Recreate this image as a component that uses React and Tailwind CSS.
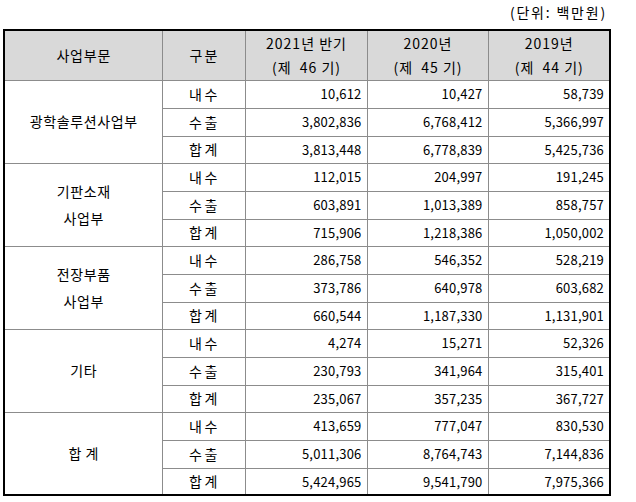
import React from "react";

const groups = [
  {
    name: ["광학솔루션사업부"],
    rows: [
      ["내수", "10,612", "10,427", "58,739"],
      ["수출", "3,802,836", "6,768,412", "5,366,997"],
      ["합계", "3,813,448", "6,778,839", "5,425,736"],
    ],
  },
  {
    name: ["기판소재", "사업부"],
    rows: [
      ["내수", "112,015", "204,997", "191,245"],
      ["수출", "603,891", "1,013,389", "858,757"],
      ["합계", "715,906", "1,218,386", "1,050,002"],
    ],
  },
  {
    name: ["전장부품", "사업부"],
    rows: [
      ["내수", "286,758", "546,352", "528,219"],
      ["수출", "373,786", "640,978", "603,682"],
      ["합계", "660,544", "1,187,330", "1,131,901"],
    ],
  },
  {
    name: ["기타"],
    rows: [
      ["내수", "4,274", "15,271", "52,326"],
      ["수출", "230,793", "341,964", "315,401"],
      ["합계", "235,067", "357,235", "367,727"],
    ],
  },
  {
    name: ["합 계"],
    rows: [
      ["내수", "413,659", "777,047", "830,530"],
      ["수출", "5,011,306", "8,764,743", "7,144,836"],
      ["합계", "5,424,965", "9,541,790", "7,975,366"],
    ],
  },
];

const heights = [28, 28, 27];

export default function App() {
  return (
    <div
      className="w-[636px] h-[502px] bg-white text-black text-[13px]"
      style={{ fontFamily: '"Noto Sans CJK KR", "Liberation Sans", sans-serif' }}
    >
      <div className="h-[29px] flex items-center justify-end pr-[29px] pb-[4px] text-[14px] tracking-[1.8px]">
        (단위: 백만원)
      </div>
      <table className="ml-[3px] w-[606px] table-fixed border-collapse border-2 border-black">
        <colgroup>
          <col className="w-[158px]" />
          <col className="w-[83px]" />
          <col className="w-[122px]" />
          <col className="w-[121px]" />
          <col className="w-[122px]" />
        </colgroup>
        <thead>
          <tr className="h-[50px] bg-[#d9d9d9] leading-[24px] text-[14px]">
            <th className="font-normal border border-[#8c8c8c] tracking-[0.8px] pl-[1px]">사업부문</th>
            <th className="font-normal border border-[#8c8c8c] tracking-[2px] pl-[2px]">구분</th>
            <th className="font-normal border border-[#8c8c8c] whitespace-pre tracking-[1px] pl-[1px]">
              {"2021년 반기\n(제  46 기)"}
            </th>
            <th className="font-normal border border-[#8c8c8c] whitespace-pre tracking-[1px] pl-[1px]">
              {"2020년\n(제  45 기)"}
            </th>
            <th className="font-normal border border-[#8c8c8c] whitespace-pre tracking-[1px] pl-[1px]">
              {"2019년\n(제  44 기)"}
            </th>
          </tr>
        </thead>
        <tbody>
          {groups.map((g) =>
            g.rows.map((r, i) => (
              <tr key={g.name.join() + i} style={{ height: heights[i] }}>
                {i === 0 && (
                  <td
                    rowSpan={3}
                    className="border border-[#8c8c8c] text-center text-[14px] leading-[27px] tracking-[0.6px] pl-[1px] whitespace-pre"
                  >
                    {g.name.join("\n")}
                  </td>
                )}
                <td className="border border-[#8c8c8c] text-center text-[14px] tracking-[2.5px] pl-[2px]">
                  {r[0]}
                </td>
                {r.slice(1).map((v, j) => (
                  <td key={j} className="border border-[#8c8c8c] text-right pr-[5px] tracking-[0.2px]">
                    {v}
                  </td>
                ))}
              </tr>
            ))
          )}
        </tbody>
      </table>
    </div>
  );
}
